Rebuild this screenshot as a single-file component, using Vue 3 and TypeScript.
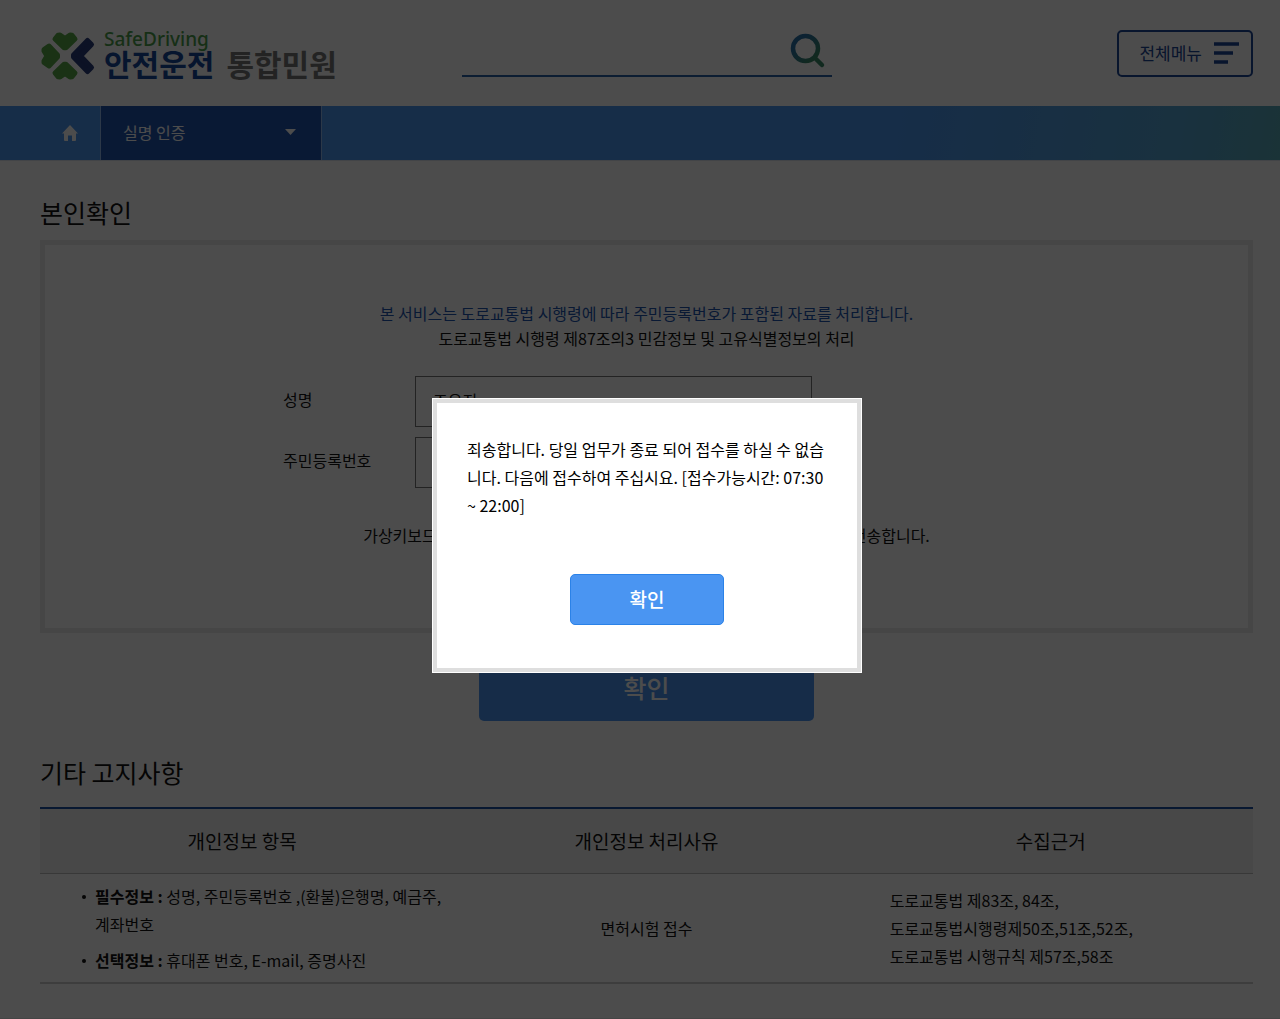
<script setup lang="ts">
import { ref } from 'vue'

const keyword = ref('')
const name = ref('조유진')
const residentNumber = ref('')
const dialogOpen = ref(true)

const columns: string[] = ['개인정보 항목', '개인정보 처리사유', '수집근거']
const items = [
  { label: '필수정보 :', text: '성명, 주민등록번호 ,(환불)은행명, 예금주, 계좌번호' },
  { label: '선택정보 :', text: '휴대폰 번호, E-mail, 증명사진' },
]
const grounds: string[] = [
  '도로교통법 제83조, 84조,',
  '도로교통법시행령제50조,51조,52조,',
  '도로교통법 시행규칙 제57조,58조',
]
</script>

<template>
  <div class="page">
    <header class="header">
      <a class="logo" href="#">
        <svg class="logo-mark" viewBox="0 0 56 50" aria-hidden="true">
          <g fill="#58a848" stroke="#58a848" stroke-width="5" stroke-linejoin="round">
            <path d="M25 7.500 30 4 32 4.200 35 8 26 16.800H24L15 8 18 4.200 20 4Z" />
            <path d="M25 42.500 30 46 32 45.800 35 42 26 33.200H24L15 42 18 45.800 20 46Z" />
            <path d="M7 25 4 20V18.500L9 15 17.500 24V26L9 35 4 31.500V30Z" />
            <path d="M47.500 9.500 51.500 13.500 40.500 25 51.500 36.500 47.500 40.500 33.500 26V24Z" fill="#2a3c7c" stroke="#2a3c7c" />
          </g>
        </svg>
        <span class="logo-text">
          <span class="logo-en">SafeDriving</span>
          <span class="logo-ko"><span class="logo-blue">안전운전</span><span class="logo-gray">통합민원</span></span>
        </span>
      </a>

      <form class="search" @submit.prevent>
        <input v-model="keyword" class="search-input" type="text" aria-label="검색어" />
        <button class="search-button" type="submit" aria-label="검색">
          <svg viewBox="0 0 36 36" width="36" height="36" aria-hidden="true">
            <defs>
              <linearGradient id="lens" x1="0" y1="0" x2="1" y2="1">
                <stop offset="0.2" stop-color="#2b72a8" />
                <stop offset="0.75" stop-color="#3b8a68" />
              </linearGradient>
            </defs>
            <path d="M28 15.500A12.500 12.500 0 1 1 3 15.500A12.500 12.500 0 1 1 28 15.500ZM24.500 24.500 32 32" fill="none" stroke="url(#lens)" stroke-width="4.500" stroke-linecap="round" />
          </svg>
        </button>
      </form>

      <div class="menu">
        <button class="menu-button" type="button">
          전체메뉴
          <svg viewBox="0 0 25 22" width="25" height="22" aria-hidden="true">
            <path d="M0 2H25M0 11H19M0 20H14" stroke="#1c4696" stroke-width="3.500" />
          </svg>
        </button>
      </div>
    </header>

    <nav class="nav">
      <a class="home" href="#" aria-label="홈">
        <svg viewBox="0 0 16 16" width="16" height="16" aria-hidden="true">
          <path d="M8 0 16 8.500H14V15Q14 16 13 16H10V10.500H6V16H3Q2 16 2 15V8.500H0Z" fill="#fff" />
        </svg>
      </a>
      <button class="current" type="button">
        실명 인증
        <svg viewBox="0 0 11 6" width="11" height="6" aria-hidden="true"><path d="M0 0H11L5.500 6Z" fill="#fff" /></svg>
      </button>
    </nav>

    <main class="main">
      <h2 class="title">본인확인</h2>
      <form id="identity" class="box" @submit.prevent>
        <p class="notice"><strong>본 서비스는 도로교통법 시행령에 따라 주민등록번호가 포함된 자료를 처리합니다.</strong></p>
        <p class="notice">도로교통법 시행령 제87조의3 민감정보 및 고유식별정보의 처리</p>
        <div class="fields">
          <label for="name">성명</label>
          <input id="name" v-model="name" type="text" />
          <label for="resident">주민등록번호</label>
          <input id="resident" v-model="residentNumber" type="password" />
        </div>
        <p class="notice">가상키보드를 사용하여 입력하신 정보를 더욱 안전하게 암호화한 뒤 서버로 전송합니다.</p>
      </form>
      <button class="submit" type="submit" form="identity">확인</button>

      <h2 class="title">기타 고지사항</h2>
      <table class="table">
        <thead>
          <tr><th v-for="column in columns" :key="column" scope="col">{{ column }}</th></tr>
        </thead>
        <tbody>
          <tr>
            <td>
              <ul class="items">
                <li v-for="item in items" :key="item.label"><b>{{ item.label }}</b> {{ item.text }}</li>
              </ul>
            </td>
            <td class="reason">면허시험 접수</td>
            <td class="grounds"><p v-for="ground in grounds" :key="ground">{{ ground }}</p></td>
          </tr>
        </tbody>
      </table>
    </main>
    <footer class="footer"></footer>

    <div v-if="dialogOpen" class="overlay">
      <section class="dialog" role="dialog" aria-modal="true" aria-describedby="message">
        <p id="message">죄송합니다. 당일 업무가 종료 되어 접수를 하실 수 없습니다. 다음에 접수하여 주십시요. [접수가능시간: 07:30 ~ 22:00]</p>
        <button class="confirm" type="button" @click="dialogOpen = false">확인</button>
      </section>
    </div>
  </div>
</template>

<style>
body {
  margin: 0;
  background: #fff;
}
</style>

<style scoped>
.page {
  min-height: 100vh;
  overflow: hidden;
  color: #111;
  font: 16px/28px "Noto Sans CJK KR", "Noto Sans", sans-serif;
}
.page *,
.page {
  box-sizing: border-box;
}
button,
input {
  font: inherit;
  color: inherit;
}
button {
  cursor: pointer;
}
p {
  margin: 0;
}
.header {
  display: grid;
  grid-template-columns: 1fr 370px 1fr;
  align-items: center;
  height: 106px;
  padding: 0 27px 0 40px;
}
.logo {
  display: flex;
  align-items: center;
  gap: 8px;
  padding-top: 6px;
  text-decoration: none;
  white-space: nowrap;
}
.logo-mark {
  width: 56px;
  height: 50px;
}
.logo-text {
  display: flex;
  flex-direction: column;
}
.logo-en {
  color: #4c9f4c;
  font: 500 19px/14px "Noto Sans", sans-serif;
}
.logo-ko {
  display: flex;
  gap: 12px;
  font-size: 30px;
  font-weight: 700;
  line-height: 34px;
}
.logo-blue {
  color: #17489a;
}
.logo-gray {
  color: #777;
}
.search {
  display: flex;
  align-items: center;
  height: 48px;
  border-bottom: 2px solid #2b62a8;
}
.search-input {
  flex: 1;
  min-width: 0;
  border: 0;
  outline: 0;
  background: none;
}
.search-button {
  display: flex;
  margin: 0 6px 2px 0;
  padding: 0;
  border: 0;
  background: none;
}
.menu {
  display: flex;
  justify-content: flex-end;
}
.menu-button {
  display: flex;
  align-items: center;
  gap: 12px;
  height: 47px;
  padding: 0 12px 0 20px;
  border: 2px solid #1c4696;
  border-radius: 5px;
  background: #fff;
  color: #1c4696;
  font-size: 17px;
}
.nav {
  display: flex;
  height: 55px;
  border-bottom: 1px solid #dce4ee;
  background: linear-gradient(100deg, #4b96f0 0%, #4b96f0 70%, #55a4d2 92%, #58aab8 100%);
}
.home {
  display: flex;
  align-items: center;
  justify-content: flex-end;
  width: 101px;
  padding-right: 22px;
  border-right: 1px solid #93bdf0;
}
.current {
  display: flex;
  align-items: center;
  justify-content: space-between;
  width: 221px;
  padding: 0 25px 2px 22px;
  border: 0;
  border-right: 1px solid #93bdf0;
  background: #2156b0;
  color: #fff;
}
.main {
  padding: 30px 27px 34px 40px;
}
.title {
  margin: 0 0 7px;
  font-size: 25px;
  font-weight: 400;
  line-height: 42px;
}
.box {
  display: flex;
  flex-direction: column;
  align-items: center;
  height: 393px;
  padding-top: 56px;
  border: 5px solid #ebebeb;
}
.notice {
  line-height: 25px;
}
.notice strong {
  color: #2156b0;
  font-weight: 400;
}
.fields {
  display: grid;
  grid-template-columns: 132px 397px;
  row-gap: 10px;
  align-items: center;
  width: 727px;
  margin: 25px 0 35px;
}
.fields label {
  padding-bottom: 6px;
}
.fields input {
  width: 100%;
  height: 51px;
  padding: 0 17px 4px;
  border: 1px solid #777;
  background: #fff;
}
.submit {
  display: block;
  width: 335px;
  height: 64px;
  margin: 24px auto 30px;
  padding: 0 0 4px;
  border: 0;
  border-radius: 5px;
  background: #4a95f2;
  color: #fff;
  font-size: 25px;
  font-weight: 500;
}
.table {
  width: 100%;
  margin-top: 14px;
  border-collapse: collapse;
  table-layout: fixed;
  border-top: 2px solid #1c50a6;
  border-bottom: 2px solid #ccc;
}
th {
  height: 65px;
  padding: 0;
  border-bottom: 1px solid #bbb;
  background: #f2f2f2;
  font-size: 19px;
  font-weight: 400;
}
td {
  padding: 8px 0;
  vertical-align: middle;
}
.items {
  margin: 0;
  padding: 0 0 0 55px;
  list-style: none;
  word-break: keep-all;
}
.items li {
  position: relative;
}
.items li + li {
  margin-top: 8px;
}
.items li::before {
  content: "";
  position: absolute;
  top: 13px;
  left: -13px;
  width: 4px;
  height: 4px;
  border-radius: 50%;
  background: #111;
}
.items b {
  font-weight: 700;
}
.reason {
  text-align: center;
}
.grounds {
  padding-left: 41px;
}
.footer {
  border-top: 2px solid #e8e8e8;
}
.overlay {
  position: fixed;
  inset: 0;
  display: flex;
  align-items: center;
  justify-content: center;
  padding: 52px 0 0 14px;
  background: rgba(0, 0, 0, 0.7);
}
.dialog {
  display: flex;
  flex-direction: column;
  align-items: center;
  width: 430px;
  padding: 32px 30px 43px;
  border: 5px solid #dedede;
  outline: 1px solid #fff;
  outline-offset: -1px;
  background: #fff;
  color: #000;
}
.confirm {
  width: 154px;
  height: 51px;
  margin-top: 55px;
  padding: 0 0 2px;
  border: 1px solid #2b82e8;
  border-radius: 5px;
  background: #4a95f2;
  color: #fff;
  font-size: 19px;
  font-weight: 500;
}
</style>
